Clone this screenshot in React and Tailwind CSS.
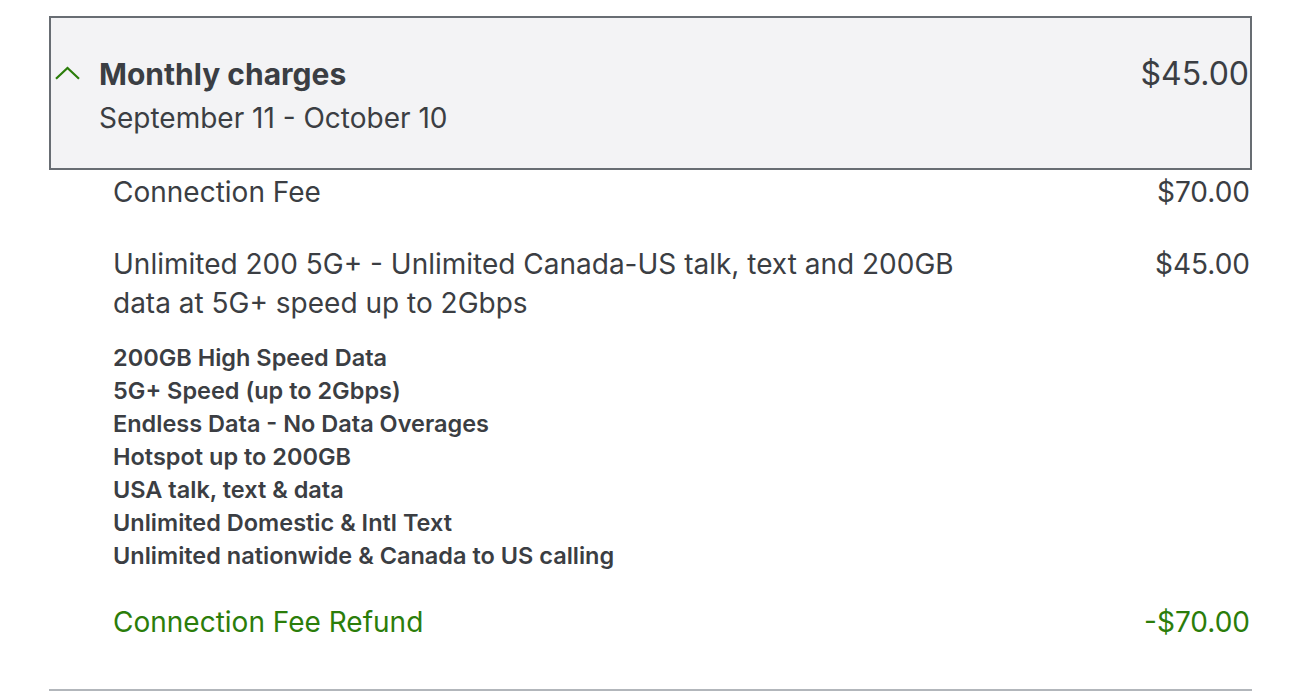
const features = [
  '200GB High Speed Data',
  '5G+ Speed (up to 2Gbps)',
  'Endless Data - No Data Overages',
  'Hotspot up to 200GB',
  'USA talk, text & data',
  'Unlimited Domestic & Intl Text',
  'Unlimited nationwide & Canada to US calling',
];

function ChevronUp() {
  return (
    <svg width="25" height="14" viewBox="0 0 25 14" fill="none" className="shrink-0">
      <path d="M1 12.8 L12.5 2 L24 12.8" stroke="#2b7d0a" strokeWidth="2.2" />
    </svg>
  );
}

export default function App() {
  return (
    <div
      className="w-full h-[694px] overflow-hidden bg-white text-[#3b3e43]"
      style={{ fontFamily: 'Inter, "Noto Sans", sans-serif' }}
    >
      <div className="pl-[49px] pr-[50px] pt-[16px]">
        {/* Header */}
        <div className="h-[154px] border-2 border-[#686d73] bg-[#f3f3f5] flex justify-between pt-[38px] pr-px">
          <div className="flex">
            <div className="pl-[4px] pt-[10px] w-[48px]">
              <ChevronUp />
            </div>
            <div>
              <div className="text-[30px] leading-[36px] font-bold text-[#3b3e43]">Monthly charges</div>
              <div className="mt-[9px] text-[28px] leading-[34px]">September 11 - October 10</div>
            </div>
          </div>
          <div className="text-[32px] leading-[36px]">$45.00</div>
        </div>

        {/* Line items */}
        <div className="pl-[64px] pr-[2px]">
          <div className="mt-[4px] flex justify-between text-[28px] leading-[36px]">
            <span>Connection Fee</span>
            <span>$70.00</span>
          </div>

          <div className="mt-[35px] flex justify-between text-[28px] leading-[39px]">
            <span className="w-[880px]">
              Unlimited 200 5G+ - Unlimited Canada-US talk, text and 200GB data at 5G+ speed up to 2Gbps
            </span>
            <span>$45.00</span>
          </div>

          <ul className="mt-[18px] text-[23.5px] leading-[33px] font-semibold">
            {features.map(f => (
              <li key={f}>{f}</li>
            ))}
          </ul>

          <div className="mt-[32px] flex justify-between text-[28px] leading-[36px] text-[#2b7d0a]">
            <span>Connection Fee Refund</span>
            <span>-$70.00</span>
          </div>
        </div>

        <div className="mt-[49px] h-[2px] bg-[#b2b6bb]" />
      </div>
    </div>
  );
}
